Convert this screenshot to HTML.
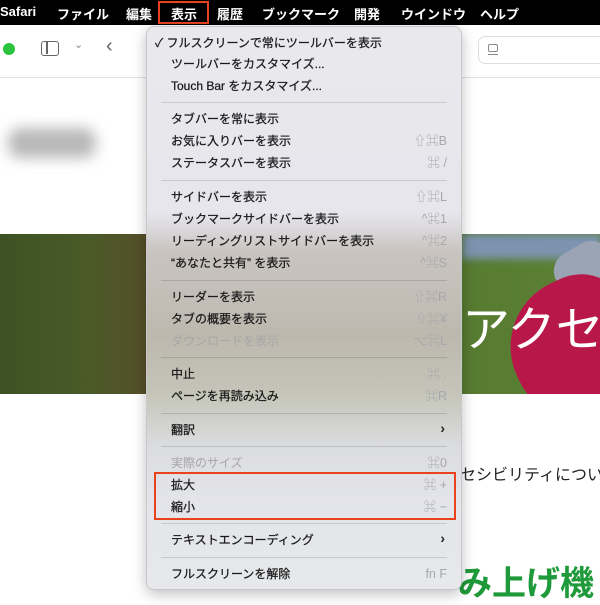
<!DOCTYPE html>
<html><head><meta charset="utf-8"><style>
*{margin:0;padding:0;box-sizing:border-box}
body{width:600px;height:602px;overflow:hidden;background:#fff;position:relative;font-family:"Liberation Sans","Noto Sans CJK JP",sans-serif}
.mb{position:absolute;left:0;top:0;width:600px;height:25px;background:#000;color:#fff;font-size:13px}
.mb span{position:absolute;top:4px;font-weight:bold}
.tb{position:absolute;left:0;top:25px;width:600px;height:53px;background:#fff;border-bottom:1px solid #e0e0e0}
.photo{position:absolute;left:0;top:234px;width:600px;height:160px;overflow:hidden;background:linear-gradient(90deg,#3d5223 0%,#4a5a28 15%,#5a4a2a 28%,#4b5a30 50%,#557a30 75%,#5d8236 100%)}
.menu{position:absolute;left:146px;top:26px;width:316px;height:564px;border-radius:8px;background:linear-gradient(180deg,#e8e8ed 0%,#e6e6ec 33%,#c9c4c0 40%,#bdb8ae 55%,#c4c4b8 65%,#dcdde0 75%,#e4e5ea 85%,#e6e8ea 100%);box-shadow:0 4px 14px rgba(0,0,0,.25);border:1px solid #c8c8cc}
.it{position:absolute;left:24px;font-size:12px;color:#1a1a1a;line-height:16px;white-space:nowrap;-webkit-text-stroke:0.25px #1a1a1a}
.sc{position:absolute;right:14px;font-size:12.5px;color:#a8a8ac;line-height:16px}
.dis{color:#a6a6a8;-webkit-text-stroke:0}
.sep{position:absolute;left:14px;right:14px;height:1px;background:rgba(0,0,0,.13)}
.ar{position:absolute;right:16px;font-size:14px;color:#222;font-weight:bold}
</style></head><body>
<div class="mb">
<span style="left:0">Safari</span>
<span style="left:57px">ファイル</span>
<span style="left:126px">編集</span>
<span style="left:171px">表示</span>
<span style="left:217px">履歴</span>
<span style="left:262px">ブックマーク</span>
<span style="left:354px">開発</span>
<span style="left:401px">ウインドウ</span>
<span style="left:480px">ヘルプ</span>
<div style="position:absolute;left:158px;top:1px;width:51px;height:23px;border:2px solid #e8431e"></div>
</div>
<div class="tb">
<div style="position:absolute;left:3px;top:18px;width:12px;height:12px;border-radius:50%;background:#2ac43e"></div>
<div style="position:absolute;left:41px;top:16px;width:18px;height:15px;border:1.5px solid #666;border-radius:3px"><div style="position:absolute;left:4px;top:0;width:1.5px;height:12px;background:#666"></div></div>
<div style="position:absolute;left:74px;top:13px;font-size:11px;color:#888">⌄</div>
<div style="position:absolute;left:106px;top:10px;font-size:20px;color:#666">‹</div>
<div style="position:absolute;left:478px;top:11px;width:130px;height:28px;border:1px solid #ddd;border-radius:7px"><div style="position:absolute;left:9px;top:7px;width:10px;height:8px;border:1.2px solid #888;border-radius:2px"></div><div style="position:absolute;left:9px;top:17px;width:10px;height:1.2px;background:#888"></div></div>
</div>
<div style="position:absolute;left:8px;top:128px;width:88px;height:30px;background:#b8b8b8;border-radius:12px;filter:blur(7px)"></div>
<div class="photo">
<div style="position:absolute;left:462px;top:0;width:140px;height:25px;background:#7d93b0;filter:blur(4px)"></div>
<div style="position:absolute;left:560px;top:10px;width:60px;height:70px;background:#9aa4b4;border-radius:20px;transform:rotate(-30deg)"></div>
<div style="position:absolute;left:510px;top:45px;width:130px;height:135px;border-radius:70px 50px 20px 60px;background:#b8174a;transform:rotate(-25deg)"></div>
<div style="position:absolute;left:462px;top:56px;font-size:48px;color:#fff;white-space:nowrap">アクセ</div>
</div>
<div style="position:absolute;left:460px;top:461px;font-size:16px;color:#222;white-space:nowrap">セシビリティについて</div>
<div style="position:absolute;left:458px;top:556px;font-size:34px;color:#1f9a3a;font-weight:bold;white-space:nowrap">み上げ機</div>

<div class="menu">
<div class="it" style="left:8px;top:8px">✓ フルスクリーンで常にツールバーを表示</div>
<div class="it" style="top:29px">ツールバーをカスタマイズ...</div>
<div class="it" style="top:51px">Touch Bar をカスタマイズ...</div>
<div class="sep" style="top:75px"></div>
<div class="it" style="top:84px">タブバーを常に表示</div>
<div class="it" style="top:106px">お気に入りバーを表示</div><div class="sc" style="top:106px">⇧⌘B</div>
<div class="it" style="top:128px">ステータスバーを表示</div><div class="sc" style="top:128px">⌘ /</div>
<div class="sep" style="top:153px"></div>
<div class="it" style="top:162px">サイドバーを表示</div><div class="sc" style="top:162px">⇧⌘L</div>
<div class="it" style="top:184px">ブックマークサイドバーを表示</div><div class="sc" style="top:184px">^⌘1</div>
<div class="it" style="top:206px">リーディングリストサイドバーを表示</div><div class="sc" style="top:206px">^⌘2</div>
<div class="it" style="top:228px">“あなたと共有” を表示</div><div class="sc" style="top:228px">^⌘S</div>
<div class="sep" style="top:253px"></div>
<div class="it" style="top:262px">リーダーを表示</div><div class="sc" style="top:262px">⇧⌘R</div>
<div class="it" style="top:284px">タブの概要を表示</div><div class="sc" style="top:284px">⇧⌘¥</div>
<div class="it dis" style="top:306px">ダウンロードを表示</div><div class="sc" style="top:306px">⌥⌘L</div>
<div class="sep" style="top:330px"></div>
<div class="it" style="top:339px">中止</div><div class="sc" style="top:339px">⌘ .</div>
<div class="it" style="top:361px">ページを再読み込み</div><div class="sc" style="top:361px">⌘R</div>
<div class="sep" style="top:386px"></div>
<div class="it" style="top:395px">翻訳</div><div class="ar" style="top:393px">›</div>
<div class="sep" style="top:419px"></div>
<div class="it dis" style="top:428px">実際のサイズ</div><div class="sc" style="top:428px">⌘0</div>
<div class="it" style="top:450px">拡大</div><div class="sc" style="top:450px">⌘ +</div>
<div class="it" style="top:472px">縮小</div><div class="sc" style="top:472px">⌘ −</div>
<div class="sep" style="top:496px"></div>
<div class="it" style="top:505px">テキストエンコーディング</div><div class="ar" style="top:503px">›</div>
<div class="sep" style="top:530px"></div>
<div class="it" style="top:539px">フルスクリーンを解除</div><div class="sc" style="top:539px">fn F</div>
</div>
<div style="position:absolute;left:154px;top:472px;width:302px;height:48px;border:2px solid #e8431e"></div>
</body></html>
